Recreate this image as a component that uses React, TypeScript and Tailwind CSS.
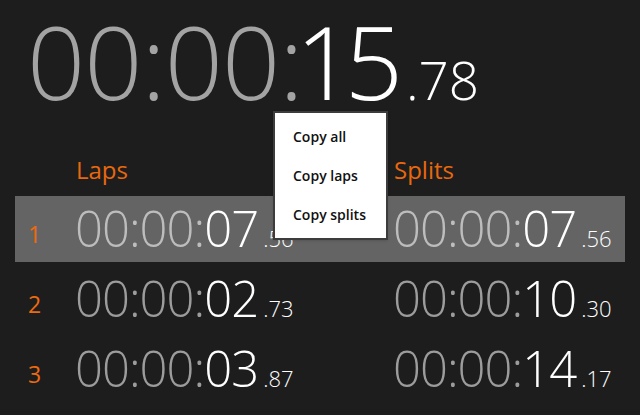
import React from 'react';

type Lap = { n: number; lap: string; lapMs: string; split: string; splitMs: string };

const laps: Lap[] = [
  { n: 1, lap: '07', lapMs: '56', split: '07', splitMs: '56' },
  { n: 2, lap: '02', lapMs: '73', split: '10', splitMs: '30' },
  { n: 3, lap: '03', lapMs: '87', split: '14', splitMs: '17' },
];

const font = { fontFamily: '"Open Sans", "Noto Sans", sans-serif' };

const RowTime: React.FC<{ sec: string; ms: string; active: boolean }> = ({ sec, ms, active }) => (
  <div className="flex items-baseline leading-none font-light whitespace-nowrap">
    <span className={active ? 'text-[49px] tracking-[-1px] text-[#bdbdbd]' : 'text-[49px] tracking-[-1px] text-[#9c9c9c]'}>00:00:</span>
    <span className="text-[49px] tracking-[-1px] text-white">{sec}</span>
    <span className="text-[22px] ml-[5px] text-white">.{ms}</span>
  </div>
);

const App: React.FC = () => {
  return (
    <div className="relative w-[640px] h-[415px] overflow-hidden bg-[#1d1d1d]" style={font}>
      <div className="flex items-baseline pl-[27px] mt-[10px] leading-none font-light whitespace-nowrap">
        <span className="text-[102px] tracking-[-1px] text-[#a3a3a3]">00:00:</span>
        <span className="text-[102px] tracking-[-9px] -ml-[7px] text-white">15</span>
        <span className="text-[53px] ml-[12px] text-white">.78</span>
      </div>

      <div className="flex mt-[46px] text-[24px] leading-none text-[#e8680f]">
        <div className="w-[76px] shrink-0" />
        <div className="w-[318px] shrink-0">Laps</div>
        <div>Splits</div>
      </div>

      <div className="flex flex-col gap-1 mt-[14px] mx-[15px]">
        {laps.map((l) => (
          <div key={l.n} className={l.n === 1 ? 'flex items-start h-[66px] bg-[#646464]' : 'flex items-start h-[66px]'}>
            <div className="w-[60px] shrink-0 pl-[13px] pt-[27px] text-[23px] leading-none text-[#ec6a10]">{l.n}</div>
            <div className="w-[318px] shrink-0 pt-[8px]">
              <RowTime sec={l.lap} ms={l.lapMs} active={l.n === 1} />
            </div>
            <div className="shrink-0 pt-[8px]">
              <RowTime sec={l.split} ms={l.splitMs} active={l.n === 1} />
            </div>
          </div>
        ))}
      </div>

      <div className="absolute left-[273px] top-[111px] w-[115px] h-[129px] bg-white border-2 border-[#3c3c3c] shadow">
        <div className="flex flex-col pl-[18px] pt-[15px] gap-[22px] text-[14px] leading-[17px] font-semibold text-[#111]">
          <div>Copy all</div>
          <div>Copy laps</div>
          <div>Copy splits</div>
        </div>
      </div>
    </div>
  );
};

export default App;
